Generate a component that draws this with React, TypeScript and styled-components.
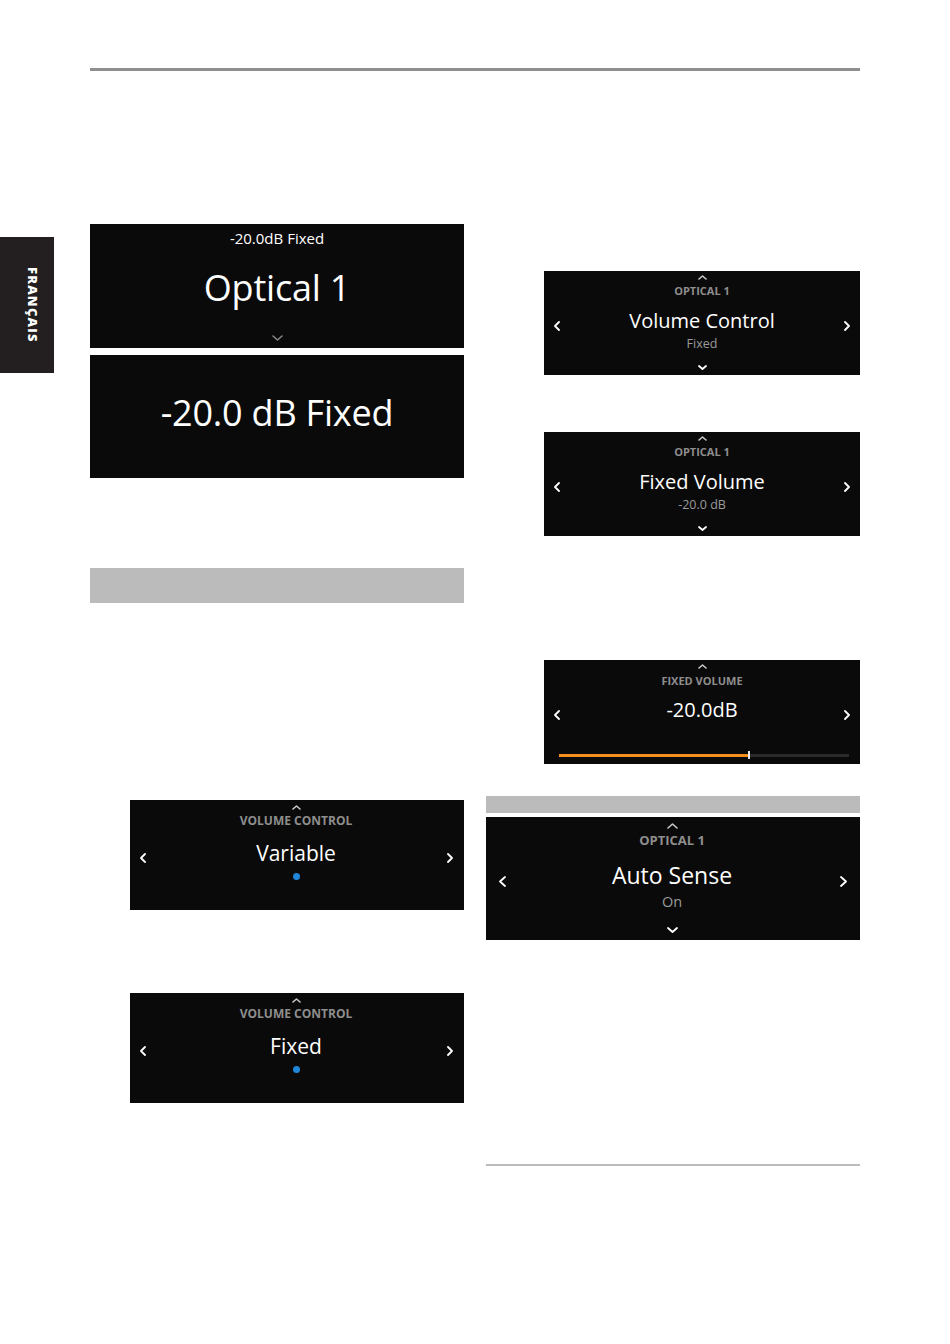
import React from "react";
import styled, { createGlobalStyle } from "styled-components";

const GlobalStyle = createGlobalStyle`
  body {
    margin: 0;
    background: #fff;
    font-family: "Open Sans", "Noto Sans", sans-serif;
  }
`;

type Variant = "sm" | "md" | "lg";

// per-size metrics of the device screens
const V = {
  sm: {
    w: 316, h: 104, left: 26, right: 26, arrowTop: 50, arrowW: 6, arrowH: 10,
    caretW: 9, caretH: 5, caretMt: 4,
    titleSize: 11, titleLh: 14, titleMt: 4,
    mainSize: 20, mainLh: 26, mainMt: 10,
    subSize: 12.5, subLh: 16, subMt: 2, downMt: 13,
  },
  md: {
    w: 334, h: 110, left: 26, right: 28, arrowTop: 53, arrowW: 6, arrowH: 10,
    caretW: 9, caretH: 5, caretMt: 5,
    titleSize: 12, titleLh: 15, titleMt: 3,
    mainSize: 21, mainLh: 28, mainMt: 11,
    subSize: 13, subLh: 16, subMt: 2, downMt: 13,
  },
  lg: {
    w: 374, h: 123, left: 32, right: 34, arrowTop: 59, arrowW: 7, arrowH: 11,
    caretW: 11, caretH: 6, caretMt: 6,
    titleSize: 13, titleLh: 16, titleMt: 3,
    mainSize: 23, mainLh: 30, mainMt: 12,
    subSize: 14.5, subLh: 18, subMt: 3, downMt: 16,
  },
};

const Page = styled.div`
  display: flex;
  width: 950px;
  min-height: 1344px;
`;

const SideTab = styled.div`
  flex-shrink: 0;
  width: 54px;
  height: 136px;
  margin-top: 237px;
  background: #231f20;
  display: flex;
  align-items: center;
  justify-content: center;
  padding-left: 12px;
  box-sizing: border-box;
`;

const TabLabel = styled.span`
  writing-mode: vertical-rl;
  color: #fff;
  font-weight: 800;
  font-size: 13px;
  letter-spacing: 1.2px;
`;

const Main = styled.div`
  margin-left: 36px;
  width: 770px;
  padding-top: 68px;
`;

const Rule = styled.div<{ $h: number; $color: string; $mt?: number }>`
  height: ${(p) => p.$h}px;
  background: ${(p) => p.$color};
  margin-top: ${(p) => p.$mt ?? 0}px;
  align-self: stretch;
`;

const Columns = styled.div`
  display: grid;
  grid-template-columns: 374px 374px;
  column-gap: 22px;
  margin-top: 153px;
  align-items: start;
`;

const Column = styled.div`
  display: flex;
  flex-direction: column;
  align-items: flex-end;
`;

const Bar = styled.div<{ $h: number; $mt: number }>`
  align-self: stretch;
  height: ${(p) => p.$h}px;
  margin-top: ${(p) => p.$mt}px;
  background: #bbbbbb;
`;

/* big info display */
const InfoPanel = styled.div<{ $h: number; $mt?: number; $pt?: number }>`
  width: 374px;
  height: ${(p) => p.$h}px;
  margin-top: ${(p) => p.$mt ?? 0}px;
  padding-top: ${(p) => p.$pt ?? 0}px;
  box-sizing: border-box;
  background: #0b0a0a;
  color: #fff;
  display: flex;
  flex-direction: column;
  align-items: center;
`;

const InfoSmall = styled.div`
  font-size: 15px;
  line-height: 20px;
  margin-top: 4px;
`;

const InfoBig = styled.div<{ $mt?: number }>`
  font-size: 36px;
  line-height: 48px;
  margin-top: ${(p) => p.$mt ?? 0}px;
  letter-spacing: -0.2px;
  white-space: nowrap;
`;

/* settings screens */
const Screen = styled.div<{ $v: Variant; $mt: number }>`
  width: ${(p) => V[p.$v].w}px;
  height: ${(p) => V[p.$v].h}px;
  margin-top: ${(p) => p.$mt}px;
  background: #0b0a0a;
  display: flex;
  flex-direction: column;
`;

const ScreenBody = styled.div<{ $v: Variant }>`
  display: grid;
  grid-template-columns: ${(p) => V[p.$v].left}px 1fr ${(p) => V[p.$v].right}px;
`;

const SideArrow = styled.div<{ $v: Variant }>`
  margin-top: ${(p) => V[p.$v].arrowTop}px;
  display: flex;
  justify-content: center;
`;

const Stack = styled.div`
  display: flex;
  flex-direction: column;
  align-items: center;
`;

const CaretBox = styled.div<{ $mt: number }>`
  margin-top: ${(p) => p.$mt}px;
  line-height: 0;
  svg {
    display: block;
  }
`;

const Title = styled.div<{ $v: Variant; $mt?: number }>`
  font-weight: 700;
  color: #8e8e8e;
  font-size: ${(p) => V[p.$v].titleSize}px;
  line-height: ${(p) => V[p.$v].titleLh}px;
  margin-top: ${(p) => p.$mt ?? V[p.$v].titleMt}px;
  white-space: nowrap;
`;

const MainText = styled.div<{ $v: Variant; $mt?: number }>`
  color: #fff;
  font-size: ${(p) => V[p.$v].mainSize}px;
  line-height: ${(p) => V[p.$v].mainLh}px;
  margin-top: ${(p) => p.$mt ?? V[p.$v].mainMt}px;
  white-space: nowrap;
`;

const SubText = styled.div<{ $v: Variant }>`
  color: #9a9a9a;
  font-size: ${(p) => V[p.$v].subSize}px;
  line-height: ${(p) => V[p.$v].subLh}px;
  margin-top: ${(p) => V[p.$v].subMt}px;
  white-space: nowrap;
`;

const Dot = styled.div`
  width: 7px;
  height: 7px;
  border-radius: 50%;
  background: #1f86da;
  margin-top: 6px;
`;

const Slider = styled.div`
  display: flex;
  align-items: center;
  height: 8px;
  margin: 28px 11px 0 15px;
`;

const SliderFill = styled.div`
  height: 3px;
  background: #f5901f;
`;

const SliderThumb = styled.div`
  width: 2px;
  height: 8px;
  background: #e8e8e8;
`;

const SliderRest = styled.div`
  flex: 1;
  height: 3px;
  background: #2a2a2a;
`;

type Dir = "up" | "down" | "left" | "right";

const Chevron = ({
  dir,
  w,
  h,
  color = "#fff",
  sw = 1.8,
}: {
  dir: Dir;
  w: number;
  h: number;
  color?: string;
  sw?: number;
}) => {
  const pts = {
    up: `1,${h - 1} ${w / 2},1 ${w - 1},${h - 1}`,
    down: `1,1 ${w / 2},${h - 1} ${w - 1},1`,
    left: `${w - 1},1 1,${h / 2} ${w - 1},${h - 1}`,
    right: `1,1 ${w - 1},${h / 2} 1,${h - 1}`,
  }[dir];
  return (
    <svg width={w} height={h} viewBox={`0 0 ${w} ${h}`}>
      <polyline
        points={pts}
        fill="none"
        stroke={color}
        strokeWidth={sw}
        strokeLinecap="round"
        strokeLinejoin="round"
      />
    </svg>
  );
};

type ScreenProps = {
  v: Variant;
  mt: number;
  title: string;
  value: string;
  sub?: string;
  dot?: boolean;
  down?: boolean;
  level?: number;
  titleMt?: number;
  mainMt?: number;
};

const SettingScreen = ({ v, mt, title, value, sub, dot, down, level, titleMt, mainMt }: ScreenProps) => {
  const m = V[v];
  return (
    <Screen $v={v} $mt={mt}>
      <ScreenBody $v={v}>
        <SideArrow $v={v}>
          <Chevron dir="left" w={m.arrowW} h={m.arrowH} />
        </SideArrow>
        <Stack>
          <CaretBox $mt={m.caretMt}>
            <Chevron dir="up" w={m.caretW} h={m.caretH} color="#c9c9c9" sw={1.6} />
          </CaretBox>
          <Title $v={v} $mt={titleMt}>{title}</Title>
          <MainText $v={v} $mt={mainMt}>{value}</MainText>
          {sub && <SubText $v={v}>{sub}</SubText>}
          {dot && <Dot />}
          {down && (
            <CaretBox $mt={m.downMt}>
              <Chevron dir="down" w={m.caretW} h={m.caretH} />
            </CaretBox>
          )}
        </Stack>
        <SideArrow $v={v}>
          <Chevron dir="right" w={m.arrowW} h={m.arrowH} />
        </SideArrow>
      </ScreenBody>
      {level !== undefined && (
        <Slider>
          <SliderFill style={{ width: `${level}%` }} />
          <SliderThumb />
          <SliderRest />
        </Slider>
      )}
    </Screen>
  );
};

export default function App() {
  return (
    <>
      <GlobalStyle />
      <Page>
        <SideTab>
          <TabLabel>FRANÇAIS</TabLabel>
        </SideTab>
        <Main>
          <Rule $h={3} $color="#8f8f8f" />
          <Columns>
            <Column>
              <InfoPanel $h={124}>
                <InfoSmall>-20.0dB Fixed</InfoSmall>
                <InfoBig $mt={16}>Optical 1</InfoBig>
                <CaretBox $mt={23}>
                  <Chevron dir="down" w={11} h={6} color="#8a8a8a" sw={1.5} />
                </CaretBox>
              </InfoPanel>
              <InfoPanel $h={123} $mt={7} $pt={34}>
                <InfoBig>-20.0 dB Fixed</InfoBig>
              </InfoPanel>
              <Bar $h={35} $mt={90} />
              <SettingScreen v="md" mt={197} title="VOLUME CONTROL" value="Variable" dot />
              <SettingScreen v="md" mt={83} title="VOLUME CONTROL" value="Fixed" dot />
            </Column>
            <Column>
              <SettingScreen v="sm" mt={47} title="OPTICAL 1" value="Volume Control" sub="Fixed" down />
              <SettingScreen v="sm" mt={57} title="OPTICAL 1" value="Fixed Volume" sub="-20.0 dB" down />
              <SettingScreen v="sm" mt={124} title="FIXED VOLUME" value="-20.0dB" level={65} titleMt={5} mainMt={9} />
              <Bar $h={17} $mt={32} />
              <SettingScreen v="lg" mt={4} title="OPTICAL 1" value="Auto Sense" sub="On" down />
              <Rule $h={2} $color="#bbbbbb" $mt={224} />
            </Column>
          </Columns>
        </Main>
      </Page>
    </>
  );
}
